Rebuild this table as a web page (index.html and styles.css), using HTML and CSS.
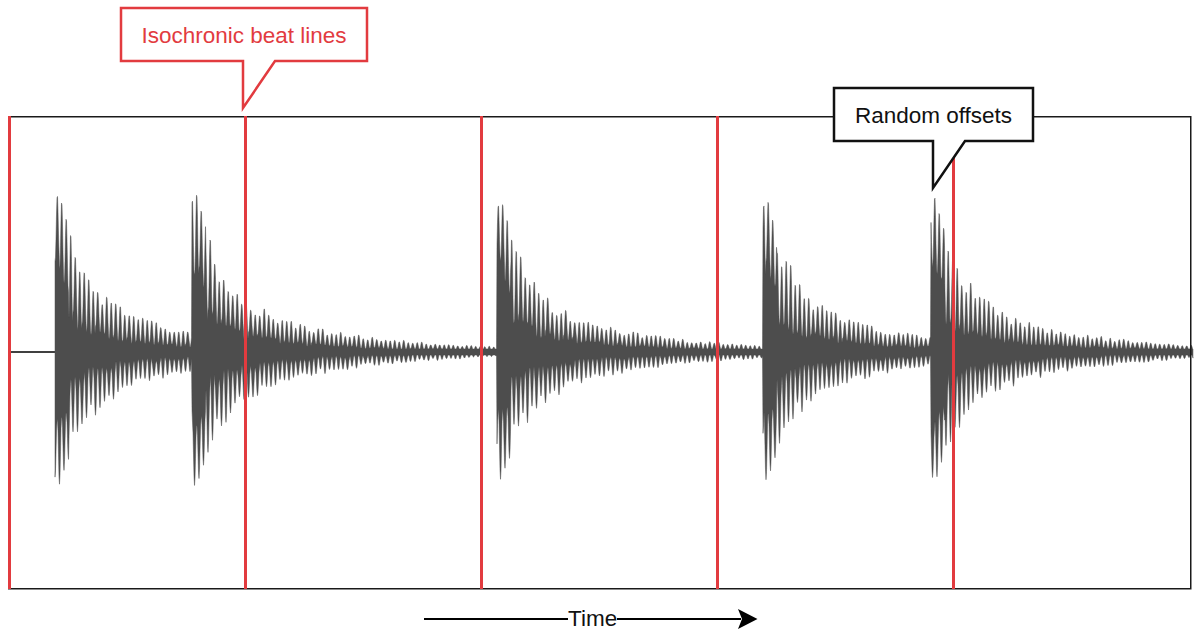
FILE: index.html
```html
<!DOCTYPE html>
<html lang="en">
<head>
<meta charset="utf-8">
<title>Isochronic beat lines</title>
<link rel="stylesheet" href="styles.css">
</head>
<body>
<div class="page">
  <div class="chart">
    <svg width="1186" height="474" viewBox="8 116 1186 474" xmlns="http://www.w3.org/2000/svg">
      <defs>
        <filter id="soft" x="-1%" y="-5%" width="102%" height="110%">
          <feGaussianBlur stdDeviation="0.35"/>
        </filter>
      </defs>
      <line class="axis" x1="10" y1="352" x2="1191" y2="352"/>
      <path class="wave" id="wave" d="" filter="url(#soft)"/>
      <rect class="frame" x="8.75" y="116.75" width="1182" height="472"/>
      <line class="beat" x1="9.5" y1="116" x2="9.5" y2="589"/>
      <line class="beat" x1="245.5" y1="116" x2="245.5" y2="589"/>
      <line class="beat" x1="481.5" y1="116" x2="481.5" y2="589"/>
      <line class="beat" x1="717.5" y1="116" x2="717.5" y2="589"/>
      <line class="beat" x1="953.5" y1="116" x2="953.5" y2="589"/>
    </svg>
  </div>
  <div class="timeline">
    <span class="rule rule-a"></span>
    <span class="time">Time</span>
    <span class="rule rule-b"></span>
    <svg class="arrowhead" width="20" height="20" viewBox="0 0 20 20" xmlns="http://www.w3.org/2000/svg">
      <path d="M0,0 L19.5,10 L0,20 L4,10 Z" fill="#000"/>
    </svg>
  </div>
  <div class="callout callout-beat">
    <svg width="246" height="100" viewBox="0 0 246 100" xmlns="http://www.w3.org/2000/svg">
      <path d="M122,53 L0,53 L0,0 L246,0 L246,53 L154,53 L122,100 Z"/>
    </svg>
    <div class="label">Isochronic beat lines</div>
  </div>
  <div class="callout callout-offsets">
    <svg width="199" height="100" viewBox="0 0 199 100" xmlns="http://www.w3.org/2000/svg">
      <path d="M99,53 L0,53 L0,0 L199,0 L199,53 L131,53 L99,100 Z"/>
    </svg>
    <div class="label">Random offsets</div>
  </div>
</div>
<script src="script.js"></script>
</body>
</html>
```

FILE: styles.css
```css
body {
  margin: 0;
  background: #ffffff;
  font-family: "Liberation Sans", Arial, sans-serif;
}

.page {
  position: relative;
  width: 1200px;
  height: 643px;
  overflow: hidden;
  padding: 116px 0 0 8px;
  box-sizing: border-box;
}

.chart {
  width: 1186px;
  height: 474px;
}

.chart svg {
  display: block;
  overflow: visible;
}

.frame {
  fill: none;
  stroke: #1a1a1a;
  stroke-width: 1.5;
}

.axis {
  stroke: #000000;
  stroke-width: 1.5;
}

.beat {
  stroke: #e23b3f;
  stroke-width: 3;
}

.wave {
  fill: #4d4d4d;
  stroke: #4d4d4d;
  stroke-width: 0.5;
  stroke-linejoin: round;
}

.callout {
  position: absolute;
  height: 100px;
}

.callout svg {
  position: absolute;
  left: 0;
  top: 0;
  overflow: visible;
}

.callout path {
  fill: #ffffff;
  stroke-width: 2.5;
  stroke-linejoin: miter;
}

.label {
  position: relative;
  height: 53px;
  display: flex;
  align-items: center;
  justify-content: center;
  font-size: 22.5px;
  line-height: 1;
  padding-top: 3px;
  box-sizing: border-box;
  white-space: nowrap;
}

.callout-beat {
  left: 121px;
  top: 8px;
  width: 246px;
  color: #e23b3f;
}

.callout-beat path {
  stroke: #e23b3f;
}

.callout-offsets {
  left: 834px;
  top: 88px;
  width: 199px;
  color: #111111;
}

.callout-offsets path {
  stroke: #111111;
}

.timeline {
  display: flex;
  align-items: center;
  height: 24px;
  margin: 17px 0 0 416px;
}

.rule {
  display: block;
  height: 2.5px;
  background: #000000;
}

.rule-a {
  width: 144px;
}

.rule-b {
  width: 124px;
}

.time {
  font-size: 22.5px;
  line-height: 1;
  color: #111111;
}

.arrowhead {
  display: block;
  margin-left: -3px;
}
```

FILE: script.js
```js
(function () {
  var seed = 20240611;
  function rnd() {
    seed = (Math.imul(seed, 1664525) + 1013904223) >>> 0;
    return seed / 4294967296;
  }
  var onsets = [55, 192, 497, 763, 931];
  var gains = [1, 1, 0.96, 0.96, 0.96];
  var x0 = 55, x1 = 1193, cy = 352, P = 4.5, step = 0.5;

  function env(x, fast, slow) {
    var s = 0;
    for (var i = 0; i < onsets.length; i++) {
      var t = x - onsets[i];
      if (t < 0) continue;
      var a = fast * Math.exp(-t / 27) + slow * Math.exp(-t / 123);
      if (t < 4) a *= 0.84 + 0.04 * t;
      a *= gains[i];
      s += a * a;
    }
    return Math.sqrt(s);
  }

  function sinceOnset(x) {
    var best = 1e9;
    for (var i = 0; i < onsets.length; i++) {
      var t = x - onsets[i];
      if (t >= 0 && t < best) best = t;
    }
    return best;
  }

  var n = Math.ceil((x1 - x0) / P) + 4;
  var tH = [], tV = [], bH = [], bV = [];
  for (var k = 0; k < n; k++) {
    tH.push(0.74 + 0.26 * rnd());
    tV.push(0.2 + 0.16 * rnd());
    bH.push(0.74 + 0.26 * rnd());
    bV.push(0.2 + 0.16 * rnd());
  }

  function tooth(u) {
    var tri = 1 - Math.abs(u - 0.5) / 0.46;
    if (tri < 0) tri = 0;
    return 0.5 - 0.5 * Math.cos(Math.PI * tri);
  }

  function value(x, H, V, phase, e) {
    var p = (x - x0) / P + phase;
    var k = Math.floor(p);
    var u = p - k;
    var t = sinceOnset(x);
    var h = H[k % n], v = V[k % n];
    if (t < 14) {
      h = 0.93 + 0.07 * h;
      v = v + 0.25;
    }
    var val = e * (v + (h - v) * tooth(u));
    return Math.max(val, 3);
  }

  var top = [], bot = [];
  for (var x = x0; x <= x1 + 0.001; x += step) {
    var et = env(x, 118, 63);
    var eb = env(x, 90, 60);
    top.push(x.toFixed(2) + ',' + (cy - value(x, tH, tV, 0, et)).toFixed(2));
    bot.push(x.toFixed(2) + ',' + (cy + value(x, bH, bV, 0.5, eb)).toFixed(2));
  }
  bot.reverse();
  var d = 'M' + top.join(' L') + ' L' + bot.join(' L') + ' Z';
  document.getElementById('wave').setAttribute('d', d);
})();
```
